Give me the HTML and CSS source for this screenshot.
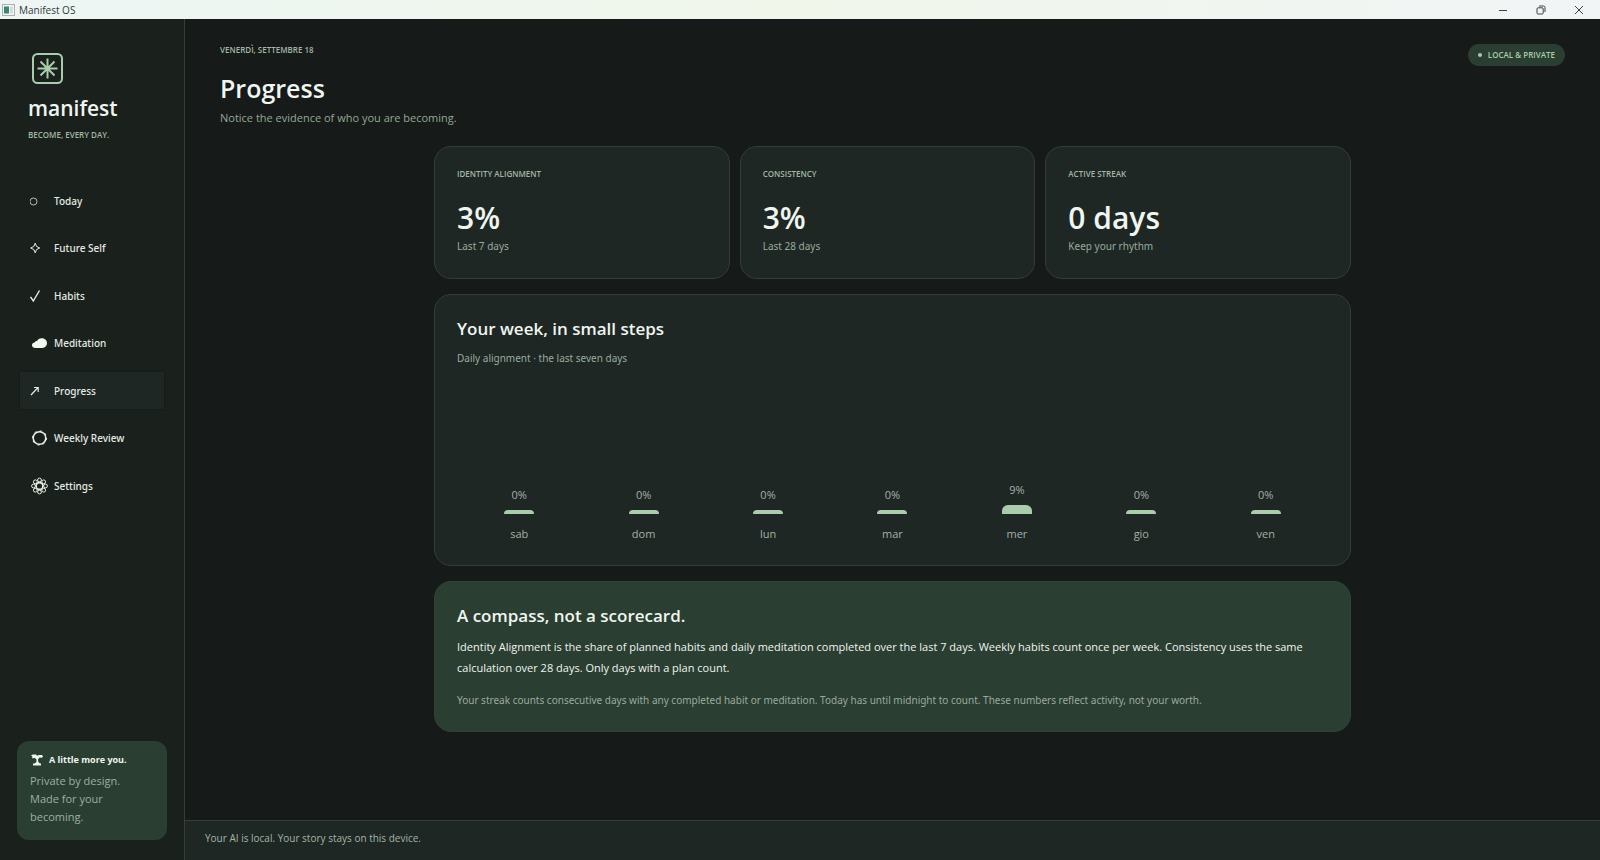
FILE: index.html
```html
<!DOCTYPE html>
<html lang="en">
<head>
  <meta charset="UTF-8" />
  <meta name="viewport" content="width=device-width, initial-scale=1.0" />
  <title>Manifest OS</title>
  <link rel="stylesheet" href="styles.css">
</head>
<body>

  <!-- Window title bar -->
  <header class="titlebar">
    <svg class="titlebar-icon" viewBox="0 0 13 12">
      <rect x="0.5" y="0.5" width="12" height="11" fill="#f4f7f5" stroke="#a9b3ae"/>
      <rect x="2" y="2.5" width="5" height="7" fill="#3f8479"/>
      <rect x="8" y="2.5" width="3" height="7" fill="#d5dcd8"/>
    </svg>
    <span class="titlebar-name">Manifest OS</span>
    <div class="window-controls">
      <button type="button" aria-label="Minimize"><svg viewBox="0 0 10 10"><path d="M1 5.5h8"/></svg></button>
      <button type="button" aria-label="Restore"><svg viewBox="0 0 10 10"><rect x="1" y="2.8" width="6.2" height="6.2" rx="1"/><path d="M3 1h4.4a1.6 1.6 0 0 1 1.6 1.6V7"/></svg></button>
      <button type="button" aria-label="Close"><svg viewBox="0 0 10 10"><path d="M1 1l8 8M9 1l-8 8"/></svg></button>
    </div>
  </header>

  <div class="app">
    <!-- Sidebar -->
    <aside class="sidebar">
      <div class="brand">
        <svg class="brand-logo" viewBox="0 0 32 32">
          <rect x="1" y="1" width="29" height="29" rx="4.5"/>
          <path d="M15.5 5.500v20M5.500 15.500h20M8.500 8.500l14 14M22.500 8.500l-14 14"/>
        </svg>
        <div class="brand-name">manifest</div>
        <div class="caption">BECOME, EVERY DAY.</div>
      </div>

      <nav class="nav">
        <a href="#" class="nav-item">
          <svg class="nav-icon" viewBox="0 0 18 18"><circle cx="3.500" cy="9.500" r="3.500" opacity="0.75"/></svg>
          Today
        </a>
        <a href="#" class="nav-item">
          <svg class="nav-icon" viewBox="0 0 18 18"><path d="M5.200 4.200l1.300 3.200 3.200 1.600-3.200 1.600-1.300 3.200-1.300-3.200L.700 9l3.200-1.600z"/></svg>
          Future Self
        </a>
        <a href="#" class="nav-item">
          <svg class="nav-icon" viewBox="0 0 18 18"><path stroke-width="1.400" d="M.500 10l2.800 4L9.500 3.500"/></svg>
          Habits
        </a>
        <a href="#" class="nav-item">
          <svg class="nav-icon" viewBox="0 0 18 18"><path class="solid" d="M5.500 14C3.300 14 2 12.700 2 11.200c0-1.600 1.200-2.500 2.600-2.600.4-1 1.400-1.700 2.500-1.500C8 5.200 9.400 4.300 11.500 4.300c3 0 5.500 2 5.500 4.800 0 3-2 4.900-4.500 4.900z"/></svg>
          Meditation
        </a>
        <a href="#" class="nav-item active">
          <svg class="nav-icon" viewBox="0 0 18 18"><path stroke-width="1.200" d="M1 13l7-7.500M4 5.500h4.200V10"/></svg>
          Progress
        </a>
        <a href="#" class="nav-item">
          <svg class="nav-icon" viewBox="0 0 18 18"><circle cx="9.500" cy="9" r="6.300" stroke-width="1.600"/><circle cx="9.500" cy="9" r="7.100" stroke-width="1" stroke-dasharray="2.200 3.370"/></svg>
          Weekly Review
        </a>
        <a href="#" class="nav-item">
          <svg class="nav-icon" viewBox="0 0 18 18">
            <circle cx="9.500" cy="9" r="3.400" stroke-width="1.600"/>
            <circle cx="9.500" cy="3" r="1.900"/><circle cx="13.700" cy="4.800" r="1.900"/>
            <circle cx="15.500" cy="9" r="1.900"/><circle cx="13.700" cy="13.200" r="1.900"/>
            <circle cx="9.500" cy="15" r="1.900"/><circle cx="5.300" cy="13.200" r="1.900"/>
            <circle cx="3.500" cy="9" r="1.900"/><circle cx="5.300" cy="4.800" r="1.900"/>
          </svg>
          Settings
        </a>
      </nav>

      <div class="note">
        <div class="note-title">
          <svg class="note-icon" viewBox="0 0 12 12"><path d="M0 1.500L2 .500h3l1 1.200L8 1h3l1 1.600-1 1.200-2.500-.3L7 5.500l.3 2.500L9 9.500h1V11.500H2V9.500h1.500L5.500 8l-.2-3L3.500 4 1 4.300 1.500 2.500z"/></svg>
          A little more you.
        </div>
        <p>Private by design.<br>Made for your<br>becoming.</p>
      </div>
    </aside>

    <!-- Progress page -->
    <main class="main">
      <div class="page-header">
        <div>
          <div class="caption">VENERDÌ, SETTEMBRE 18</div>
          <h1>Progress</h1>
          <p class="subtitle">Notice the evidence of who you are becoming.</p>
        </div>
        <div class="badge"><span class="badge-dot"></span>LOCAL &amp; PRIVATE</div>
      </div>

      <div class="content">
        <section class="stats">
          <div class="card stat">
            <div class="caption">IDENTITY ALIGNMENT</div>
            <div class="stat-value">3%</div>
            <div class="muted">Last 7 days</div>
          </div>
          <div class="card stat">
            <div class="caption">CONSISTENCY</div>
            <div class="stat-value">3%</div>
            <div class="muted">Last 28 days</div>
          </div>
          <div class="card stat">
            <div class="caption">ACTIVE STREAK</div>
            <div class="stat-value">0 days</div>
            <div class="muted">Keep your rhythm</div>
          </div>
        </section>

        <section class="card week">
          <h2>Your week, in small steps</h2>
          <p class="muted">Daily alignment · the last seven days</p>
          <div class="chart">
            <div class="day"><span>0%</span><div class="bar" style="height: 4px"></div><span>sab</span></div>
            <div class="day"><span>0%</span><div class="bar" style="height: 4px"></div><span>dom</span></div>
            <div class="day"><span>0%</span><div class="bar" style="height: 4px"></div><span>lun</span></div>
            <div class="day"><span>0%</span><div class="bar" style="height: 4px"></div><span>mar</span></div>
            <div class="day"><span>9%</span><div class="bar" style="height: 9px"></div><span>mer</span></div>
            <div class="day"><span>0%</span><div class="bar" style="height: 4px"></div><span>gio</span></div>
            <div class="day"><span>0%</span><div class="bar" style="height: 4px"></div><span>ven</span></div>
          </div>
        </section>

        <section class="card compass">
          <h2>A compass, not a scorecard.</h2>
          <p class="compass-text">Identity Alignment is the share of planned habits and daily meditation completed over the last 7 days. Weekly habits count once per week. Consistency uses the same calculation over 28 days. Only days with a plan count.</p>
          <p class="muted">Your streak counts consecutive days with any completed habit or meditation. Today has until midnight to count. These numbers reflect activity, not your worth.</p>
        </section>
      </div>

      <footer class="statusbar">Your AI is local. Your story stays on this device.</footer>
    </main>
  </div>

</body>
</html>
```
FILE: styles.css
```css
/* Global Styles */
* {
  box-sizing: border-box;
}
body {
  margin: 0;
  min-height: 100vh;
  display: flex;
  flex-direction: column;
  background: #161a18;
  color: #eff5ef;
  font-family: "Open Sans", "Noto Sans", sans-serif;
  font-size: 11px;
  line-height: 16px;
}
h1, h2, p {
  margin: 0;
}
h1 {
  margin-top: 14px;
  font-size: 25px;
  line-height: 36px;
  font-weight: 600;
}
h2 {
  font-size: 17px;
  line-height: 24px;
  font-weight: 600;
}
.caption {
  color: #a3b5a6;
  font-size: 8px;
  line-height: 12px;
  font-weight: 600;
}
.muted {
  color: #9aaa9e;
  font-family: "Noto Sans", sans-serif;
  font-size: 10px;
}

/* Title bar */
.titlebar {
  display: flex;
  align-items: center;
  height: 19px;
  padding-left: 2px;
  background: linear-gradient(90deg, #edf6f4, #f0f6ea 50%, #f1f5f6);
  color: #333a37;
}
.titlebar-icon {
  width: 13px;
  height: 12px;
  margin-right: 4px;
}
.titlebar-name {
  font-size: 10px;
}
.window-controls {
  display: flex;
  margin-left: auto;
  padding-right: 2px;
}
.window-controls button {
  width: 38px;
  height: 17px;
  padding: 0;
  border: none;
  background: none;
}
.window-controls svg {
  display: block;
  width: 10px;
  height: 10px;
  margin: auto;
  fill: none;
  stroke: #3c4240;
}

/* Sidebar */
.app {
  flex: 1;
  display: flex;
}
.sidebar {
  display: flex;
  flex-direction: column;
  width: 185px;
  padding: 34px 17px 20px;
  background: #1a211d;
  border-right: 1px solid #363e3a;
}
.brand {
  padding-left: 11px;
}
.brand-logo {
  display: block;
  width: 32px;
  height: 32px;
  margin-left: 4px;
  fill: none;
  stroke: #a9cdaa;
  stroke-width: 2;
}
.brand-name {
  margin: 9px 0 7px;
  font-size: 21px;
  line-height: 28px;
  font-weight: 600;
}
.nav {
  display: flex;
  flex-direction: column;
  justify-content: space-between;
  height: 324px;
  margin-top: 40px;
  padding: 0 2px;
}
.nav-item {
  display: flex;
  align-items: center;
  gap: 6px;
  height: 39px;
  padding-left: 10px;
  border: 1px solid transparent;
  color: #e4ebe5;
  font-family: "Noto Sans", sans-serif;
  font-size: 10px;
  font-weight: 500;
  text-decoration: none;
}
.nav-item.active {
  background: #1e2724;
  border-color: #171c19;
}
.nav-icon {
  width: 18px;
  height: 18px;
  fill: none;
  stroke: #e6efe6;
  stroke-width: 1;
}
.nav-icon .solid {
  fill: #f0f8ef;
  stroke: none;
}
.note {
  margin-top: auto;
  padding: 11px 13px 14px;
  border-radius: 12px;
  background: #2b3e32;
}
.note-title {
  display: flex;
  align-items: center;
  gap: 6px;
  font-size: 9px;
  font-weight: 700;
}
.note-icon {
  width: 12px;
  height: 12px;
  margin-left: 1px;
  fill: #f0f8ef;
}
.note p {
  margin-top: 4px;
  color: #9db0a0;
  line-height: 18px;
}

/* Main area */
.main {
  flex: 1;
  display: flex;
  flex-direction: column;
}
.page-header {
  display: flex;
  justify-content: space-between;
  align-items: flex-start;
  padding: 25px 35px 0;
}
.subtitle {
  margin-top: 4px;
  color: #94a897;
}
.badge {
  display: flex;
  align-items: center;
  gap: 6px;
  height: 22px;
  padding: 0 10px;
  border-radius: 11px;
  background: #2b3e32;
  color: #a9cdaa;
  font-size: 8px;
  font-weight: 600;
}
.badge-dot {
  width: 4px;
  height: 4px;
  border-radius: 50%;
  background: #a9cdaa;
}
.content {
  display: flex;
  flex-direction: column;
  gap: 15px;
  width: 100%;
  max-width: 917px;
  margin: 20px auto;
}

/* Cards */
.card {
  padding: 22px 22px 23px;
  border: 1px solid #333d38;
  border-radius: 17px;
  background: #1e2724;
}
.stats {
  display: grid;
  grid-template-columns: repeat(3, 1fr);
}
.stat {
  height: 133px;
  margin-right: 10px;
  padding-top: 21px;
}
.stat:last-child {
  margin-right: 0;
}
.stat-value {
  margin-top: 17px;
  font-size: 30px;
  line-height: 41px;
  font-weight: 600;
}
.chart {
  display: flex;
  align-items: flex-end;
  height: 176px;
}
.day {
  flex: 1;
  display: flex;
  flex-direction: column;
  align-items: center;
  color: #a5afa8;
}
.bar {
  width: 30px;
  margin: 7px 0 12px;
  border-radius: 6px 6px 0 0;
  background: #a9cdaa;
}
.compass {
  background: #2b3e32;
  border-color: #2e4236;
}
.compass-text {
  margin: 8px 0 14px;
  line-height: 21px;
}
.week .muted {
  margin-top: 9px;
}

/* Status bar */
.statusbar {
  height: 40px;
  margin-top: auto;
  padding: 9px 20px;
  border-top: 1px solid #363e3a;
  background: #1e2724;
  color: #a3b5a6;
  font-size: 10px;
}
```
